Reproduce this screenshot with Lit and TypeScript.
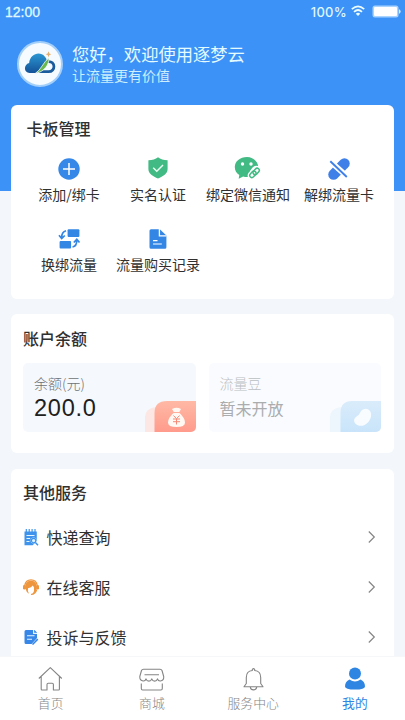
import { LitElement, html, css, svg } from "lit";
import { customElement } from "lit/decorators.js";
import { classMap } from "lit/directives/class-map.js";

const wifi = html`<svg width="14" height="12" viewBox="0 0 14 12" fill="none" stroke="#eafcff" stroke-width="1.7">
  <path d="M.8 4.2Q7-1.4 13.2 4.2"/><path d="M3 6.8Q7 3.2 11 6.8"/><path d="M4.8 8.7Q7 6.9 9.2 8.7L7 11Z" fill="#eafcff" stroke="none"/></svg>`;

const battery = html`<svg width="29" height="13" viewBox="0 0 29 13">
  <rect x=".5" y=".5" width="26" height="12" rx="2.5" fill="#a9d4ff"/><rect x="2" y="2" width="23" height="9" rx="1" fill="#fff"/><path d="M27 4.2q1.6.3 1.6 2.3t-1.6 2.3z" fill="#d5efff"/></svg>`;

const logo = html`<svg width="34" height="27" viewBox="1 1 36 28">
  <defs><linearGradient id="lg" x1="0" y1="0" x2="0" y2="1"><stop offset="0" stop-color="#2c97d2"/><stop offset="1" stop-color="#135298"/></linearGradient></defs>
  <path d="M8 25C1.500 25 1.500 16 7.500 14.500C8.500 5 18.500 1.500 24 7.500C27.500 11 25.500 13 23.500 16C21 20 18.500 25 14 25Z" fill="url(#lg)"/>
  <path d="M27.500 13C35.500 12 36 23.700 28 23.700H18" fill="none" stroke="#1b5c9d" stroke-width="2.900"/>
  <path d="M14 25.500C20 22 22 14 28.500 9C29 16 23.500 24 14 25.500Z" fill="#69b84d" stroke="#f6fbff" stroke-width=".8"/>
  <path d="M28 2l.9 2.300 2.100.9-2.100.9L28 8.400l-.9-2.300-2.100-.9 2.100-.9z" fill="#e5ae6d"/></svg>`;

const icons: Record<string, unknown> = {
  add: svg`<circle cx="13" cy="13" r="10.700" fill="#3588e8"/><path d="M13 7v12M7 13h12" stroke="#fff" stroke-width="1.500"/>`,
  shield: svg`<path d="M13 1.200C15.500 3.200 18.500 4 22.600 4.200V13C22.600 17.700 18 20.500 13 22.400C8 20.500 3.400 17.700 3.400 13V4.200C7.500 4 10.500 3.200 13 1.200Z" fill="#42ba83"/><path d="M8.200 11.800l3.600 3.500 6.200-6.300" fill="none" stroke="#e9fff4" stroke-width="1.500"/>`,
  wechat: svg`<path d="M12 .9C5 .9-.2 5.200-.2 11c0 3.500 1.700 6.200 4.500 8L3.700 22.700 8.100 20.500q3 .9 6.500.4L23 13.500C24.500 7 19 .9 12 .9Z" fill="#42ba83"/><circle cx="7.500" cy="8" r="1.700" fill="#fff"/><circle cx="16" cy="8" r="1.700" fill="#fff"/>
    <g fill="none" stroke-linecap="round"><g stroke="#fff" stroke-width="4.500"><rect x="18" y="11.800" width="5" height="7.500" rx="2.500" transform="rotate(42 20.700 15.500)"/><rect x="15.500" y="15" width="5" height="7.500" rx="2.500" transform="rotate(42 18 19)"/></g>
    <g stroke="#42ba83" stroke-width="1.500"><rect x="19" y="11.900" width="4.300" height="7.200" rx="2.150" transform="rotate(42 21.200 15.500)"/><rect x="15.700" y="14.800" width="4.300" height="7.200" rx="2.150" transform="rotate(42 18 18.400)"/></g></g>`,
  unbind: svg`<rect x="7.700" y="0" width="10.600" height="26" rx="5.300" transform="rotate(45 13 13)" fill="#3f80e8"/><path d="M4 5.200L21.200 20.700" stroke="#fff" stroke-width="5.600"/><path d="M4.300 5.300L20.800 21" stroke="#3f80e8" stroke-width="1.900"/>`,
  swap: svg`<g fill="#3386e4"><rect x="11.600" y="3.200" width="11.800" height="7.800" rx="1"/><rect x="3.600" y="15" width="11.500" height="7.500" rx="1"/></g><g fill="none" stroke="#3386e4" stroke-width="1.700"><path d="M10 4.800Q5.700 6 5.700 11.500M3 9.300l2.700 3.200 3.100-3"/><path d="M16.500 21Q20.800 20.400 20.800 14M17.800 16.500l3-3.200 2.700 3.200"/></g>`,
  record: svg`<path d="M6 3.200h8.800l6.600 6.400v11.700a1.500 1.500 0 0 1-1.500 1.500H6a1.500 1.500 0 0 1-1.500-1.500V4.700A1.500 1.500 0 0 1 6 3.200Z" fill="#3386e4"/><path d="M14.400 3v6.800h7" fill="none" stroke="#fff" stroke-width="1.300"/><path d="M8 14.600h4.500M8 18h8.800" stroke="#fff" stroke-width="1.200"/>`,
  express: svg`<path d="M1.500 2.500h12.300v8.800l-4 5H1.500Z" fill="#3e93ec"/><path d="M3.300 0v3.800M6.200 0v3.800M9.100 0v3.800M12 0v3.800" stroke="#3e93ec" stroke-width="1.200"/><path d="M3.500 6.500h8M3.500 9.500h3.700M3.500 12.500h3" stroke="#e6f6ff" stroke-width="1"/><circle cx="10.600" cy="11.600" r="3" fill="#cfeaff"/><circle cx="10.600" cy="11.600" r="2.200" fill="#dcf3ff" stroke="#3e93ec" stroke-width="1.200"/><path d="M12.400 13.500l2.600 2.700" stroke="#3e93ec" stroke-width="1.500"/>`,
  support: svg`<path d="M1.700 6.500C2.500 2 5 .8 8 .8S13.500 2 14.300 6.500" fill="none" stroke="#ee963e" stroke-width="1.300"/><path d="M2.300 8C2.300 3.500 5 1.800 8 1.800s5.700 1.700 5.700 6.200L13 12.500q-1.500 1.800-3.200 2.200Q11.600 12 11 8.500L9.800 6.500Q8.500 8.800 5 9.200Q4.300 12 6 14.700Q3 13.500 2.300 8Z" fill="#ee963e"/><rect x="0" y="6" width="2.900" height="4.600" rx="1.300" fill="#ee963e"/><rect x="13.100" y="6" width="2.900" height="4.600" rx="1.300" fill="#ee963e"/><path d="M13.800 10.500Q12.500 15 8 15.500" fill="none" stroke="#ee963e" stroke-width="1.200"/>`,
  feedback: svg`<path d="M3 .9h8.500l2.500 2.700v5.500l-5.400 6H3a1.500 1.500 0 0 1-1.500-1.500V2.400A1.500 1.500 0 0 1 3 .9Z" fill="#3687e8"/><path d="M10.600 1v3.400h3.500M4 6.800h7.500M4 10.300h5" fill="none" stroke="#e8f5ff" stroke-width="1.100"/><path d="M9.500 15.500l5.300-5.400" stroke="#3687e8" stroke-width="1.500"/>`,
  home: svg`<path d="M1.800 12.500L13.300 1.600 24.800 12.500M4.200 10.800V23.200Q4.200 24 5 24H10V18.500Q10 17.300 11.200 17.300H15.200Q16.400 17.300 16.400 18.500V24H21.600Q22.400 24 22.400 23.200V10.800"/>`,
  shop: svg`<path d="M5.500 3.200H22Q23.500 3.200 24 4.500L25.700 10.500C26.200 15.500 20.500 16.200 19.500 12.800C18.500 15.900 14.800 15.900 13.800 12.800C12.800 15.900 9 15.900 8 12.800C7 16.200 1.500 15.500 1.800 10.500L3.500 4.500Q4 3.200 5.500 3.200ZM6.500 8.800H21M3.300 17.500V22.600Q3.300 24 4.700 24H22.900Q24.300 24 24.300 22.600V17.500"/>`,
  bell: svg`<path d="M4 20.800L6.300 17.500V11.500C6.300 7.300 9 4.800 12.300 4.500V3.500Q13.500 1.800 14.700 3.500V4.500C18 4.800 20.700 7.300 20.700 11.500V17.500L23 20.800ZM10.300 21.200C10.800 24.800 16.200 24.800 16.700 21.200"/>`,
  person: svg`<circle cx="14" cy="7.400" r="6" fill="#2f86e2"/><path d="M8.500 13.500Q14 17.500 19.500 13.500Q24 15.500 24 20.500Q24 23.600 14 23.600T4 20.500Q4 15.500 8.500 13.500Z" fill="#2f86e2"/>`,
};

const actions = [
  ["add", "添加/绑卡"], ["shield", "实名认证"], ["wechat", "绑定微信通知"],
  ["unbind", "解绑流量卡"], ["swap", "换绑流量"], ["record", "流量购买记录"],
];
const services = [["express", "快递查询"], ["support", "在线客服"], ["feedback", "投诉与反馈"]];
const tabs = [["home", "首页"], ["shop", "商城"], ["bell", "服务中心"], ["person", "我的"]];

@customElement("app-root")
export class AppRoot extends LitElement {
  static styles = css`
    :host { display: flex; flex-direction: column; width: 100%; height: 720px; overflow: hidden; box-sizing: border-box;
      background: linear-gradient(#3d92f7 0 191px, #f3f7fb 191px);
      font-family: "Noto Sans CJK SC", sans-serif; color: #303030; }
    svg { display: block; flex: none; overflow: visible; }
    .status { display: flex; align-items: center; height: 24px; padding: 0 4px 0 5px; color: #dff8ff; }
    .time { flex: 1; font: 14px/24px "Liberation Sans", sans-serif; -webkit-text-stroke: .3px #dff8ff; }
    .pct { font: 500 13px/22px Inter, sans-serif; letter-spacing: .3px; margin-right: 4px; }
    .wifi { margin: 0 7px 2px 0; }
    .battery { margin-bottom: 1px; }
    .user { display: flex; align-items: center; height: 81px; padding: 0 0 2px 17px; box-sizing: border-box; }
    .avatar { width: 42px; height: 42px; border-radius: 50%; border: 2.500px solid #a3cffb; background: #f6fbff; display: flex; align-items: center; justify-content: center; margin: 0 9px 0 0; }
    .hello { font-size: 17.300px; line-height: 24px; color: #e4fbff; }
    .slogan { font-size: 14px; line-height: 20px; margin-top: -1px; color: #cceeff; }
    .content { flex: 1; min-height: 0; overflow: hidden; display: flex; flex-direction: column; padding: 0 11px; }
    .card { background: #fff; border-radius: 6px; flex: none; box-sizing: border-box; }
    .heading { font-size: 16px; line-height: 24px; font-weight: 500; }
    .manage { height: 194px; padding: 11px 0 0 13.500px; margin-bottom: 15px; }
    .manage .heading { padding-left: 2px; }
    .actions { display: grid; grid-template-columns: 89px 89px 91px 91px; grid-auto-rows: 69.500px; margin-top: 16px; }
    .action { display: flex; flex-direction: column; align-items: center; font-size: 14px; line-height: 20px; white-space: nowrap; }
    .action svg { margin-bottom: 2px; }
    .account { height: 139px; padding: 12px 13px 0 12px; margin-bottom: 16px; }
    .wallets { display: flex; gap: 13px; margin-top: 13px; }
    .wallet { flex: 1; display: flex; justify-content: space-between; height: 69px; background: #f5f8fc; border-radius: 5px; overflow: hidden; }
    .info { padding: 10px 0 0 11px; white-space: nowrap; }
    .label { font-size: 14px; line-height: 20px; color: #707274; font-weight: 300; }
    .amount { font: 23.500px/28px "Liberation Sans", sans-serif; letter-spacing: .75px; color: #202020; margin-top: 1px; }
    .off { background: #f9fbff; }
    .off .label { color: #bcbfc2; }
    .closed { font-size: 16px; line-height: 24px; color: #aaacad; margin-top: 3px; }
    .wallet svg { align-self: flex-end; }
    .services { padding: 11px 18px 0 12px; }
    .row { display: flex; align-items: center; height: 50px; font-size: 16px; }
    .list { padding-top: 8px; }
    .name { flex: 1; margin-left: 7.400px; }
    .tabs { flex: none; height: 64px; display: grid; grid-template-columns: repeat(4, 1fr); background: #fff; border-top: 1px solid #f5f7f9; box-sizing: border-box; }
    .tab { display: flex; flex-direction: column; align-items: center; padding-top: 9px; font-size: 12.800px; line-height: 18px; color: #858585; font-weight: 300; }
    .tab svg { margin-bottom: 2px; }
    .active { color: #2f86e2; font-weight: 400; padding-left: 1px; }
  `;

  render() {
    return html`
      <div class="status"><span class="time">12:00</span><span class="pct">100%</span><span class="wifi">${wifi}</span><span class="battery">${battery}</span></div>
      <header class="user"><div class="avatar">${logo}</div>
        <div><div class="hello">您好，欢迎使用逐梦云</div><div class="slogan">让流量更有价值</div></div>
      </header>
      <main class="content">
        <section class="card manage"><div class="heading">卡板管理</div>
          <div class="actions">${actions.map(([i, t]) => html`<div class="action"><svg width="26" height="26" viewBox="0 0 26 26">${icons[i]}</svg>${t}</div>`)}</div>
        </section>
        <section class="card account"><div class="heading">账户余额</div>
          <div class="wallets">
            <div class="wallet"><div class="info"><div class="label">余额(元)</div><div class="amount">200.0</div></div>
              <svg width="51" height="31" viewBox="0 0 51 31"><defs><linearGradient id="red" x1="0" y1="0" x2="0" y2="1"><stop offset="0" stop-color="#ffb9a5"/><stop offset="1" stop-color="#ff9b8c"/></linearGradient></defs>
                <path d="M0 31V17Q0 7 12 6V31Z" fill="#fde7e5"/><path d="M9.500 31V12Q9.500 0 22 0H51V31Z" fill="url(#red)"/>
                <g fill="#fff8f3"><path d="M27 8Q31.500 5.500 36 8L34.300 11H28.800Z"/><path d="M28.500 12h6Q40 17 40 21.500Q40 26 31.500 26T23 21.500Q23 17 28.500 12Z"/></g>
                <path d="M28.500 14.500l3 3.200 3-3.200M28 18h7M28 20.700h7M31.500 18v5.500" fill="none" stroke="#f58b77" stroke-width="1"/></svg></div>
            <div class="wallet off"><div class="info"><div class="label">流量豆</div><div class="closed">暂未开放</div></div>
              <svg width="51" height="31" viewBox="0 0 51 31"><defs><linearGradient id="blue" x1="0" y1="0" x2="0" y2="1"><stop offset="0" stop-color="#d9ecfb"/><stop offset="1" stop-color="#c9e4fa"/></linearGradient></defs>
                <path d="M0 31V17Q0 7 12 6V31Z" fill="#edf6fd"/><path d="M10.500 31V12Q10.500 0 22 0H51V31Z" fill="url(#blue)"/>
                <path d="M33 8.500C38 6 42 10.500 41 15.500C39.500 22 34 26 28.500 24.500C23.500 23 22.500 17.500 27 15.200C30.500 13.500 29.500 10.500 33 8.500Z" fill="#f8fcff"/></svg></div>
          </div>
        </section>
        <section class="card services"><div class="heading">其他服务</div>
          <div class="list">${services.map(([i, t]) => html`<div class="row"><svg width="16" height="17" viewBox="0 0 16 17">${icons[i]}</svg><span class="name">${t}</span>
            <svg width="8" height="12" viewBox="0 0 8 12" fill="none" stroke="#858585" stroke-width="1.200"><path d="M.8 .5L6.300 6 .8 11.500"/></svg></div>`)}</div>
        </section>
      </main>
      <nav class="tabs">${tabs.map(([i, t]) => html`<div class=${classMap({ tab: true, active: i === "person" })}>
        <svg width="27" height="26" viewBox="0 0 27 26" fill="none" stroke=${i === "person" ? "none" : "#858585"} stroke-width="1.100" stroke-linejoin="round">${icons[i]}</svg>${t}</div>`)}</nav>`;
  }
}
